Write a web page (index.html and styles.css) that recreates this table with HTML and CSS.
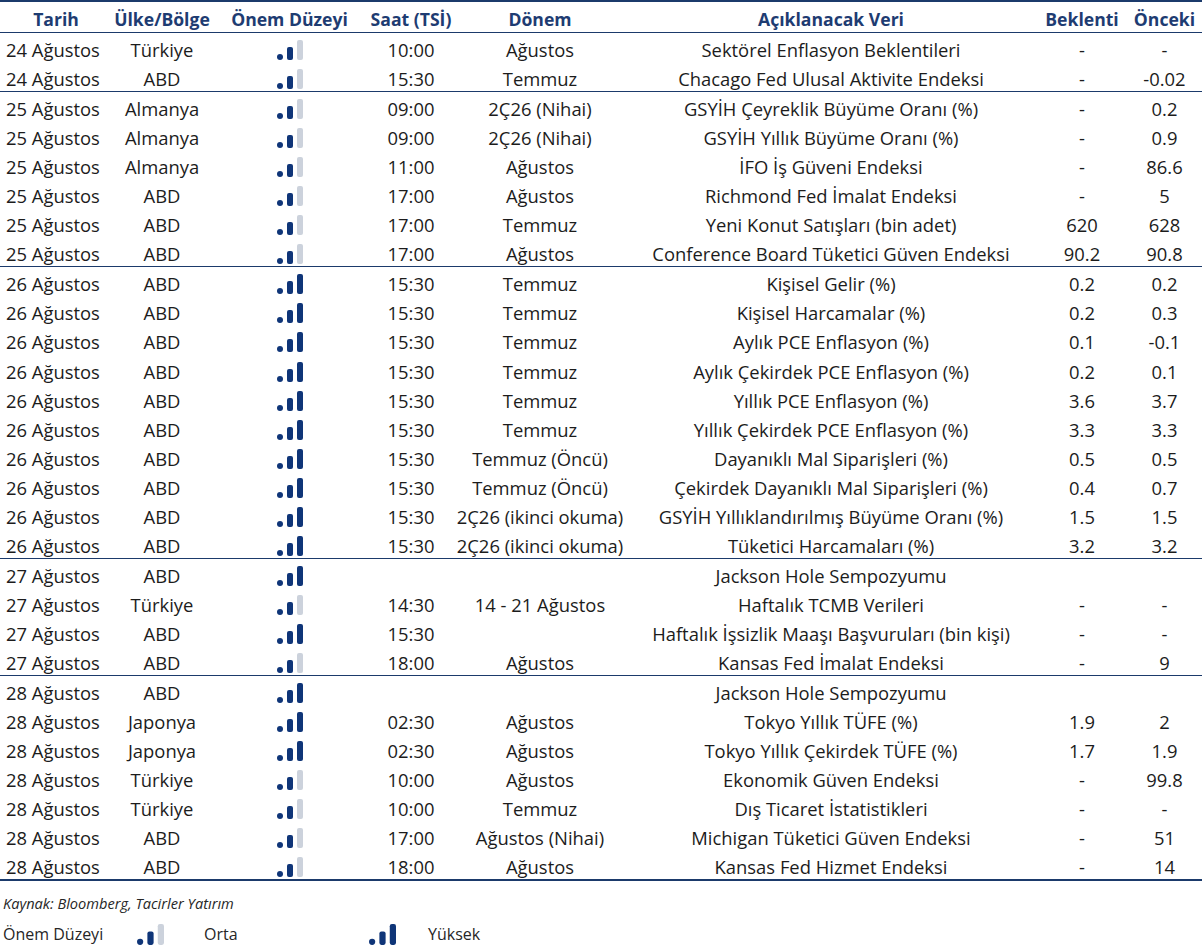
FILE: index.html
```html
<!DOCTYPE html>
<html lang="tr">
<head>
<meta charset="utf-8">
<title>Ekonomik Takvim</title>
<link rel="stylesheet" href="styles.css">
</head>
<body>
<div class="cal">
  <div class="row head">
    <div>Tarih</div><div>Ülke/Bölge</div><div>Önem Düzeyi</div><div>Saat (TSİ)</div><div>Dönem</div><div>Açıklanacak Veri</div><div>Beklenti</div><div>Önceki</div>
  </div>

  <div class="group">
    <div class="row"><div class="date">24 Ağustos</div><div>Türkiye</div><div class="ic"><svg class="lvl" viewBox="0 0 26 20"><rect x="0" y="14" width="6" height="6" rx="3"/><rect x="10" y="7" width="6" height="13" rx="2"/><rect class="off" x="20" y="0" width="6" height="20" rx="2"/></svg></div><div>10:00</div><div>Ağustos</div><div>Sektörel Enflasyon Beklentileri</div><div>-</div><div>-</div></div>
    <div class="row"><div class="date">24 Ağustos</div><div>ABD</div><div class="ic"><svg class="lvl" viewBox="0 0 26 20"><rect x="0" y="14" width="6" height="6" rx="3"/><rect x="10" y="7" width="6" height="13" rx="2"/><rect class="off" x="20" y="0" width="6" height="20" rx="2"/></svg></div><div>15:30</div><div>Temmuz</div><div>Chacago Fed Ulusal Aktivite Endeksi</div><div>-</div><div>-0.02</div></div>
  </div>

  <div class="group">
    <div class="row"><div class="date">25 Ağustos</div><div>Almanya</div><div class="ic"><svg class="lvl" viewBox="0 0 26 20"><rect x="0" y="14" width="6" height="6" rx="3"/><rect x="10" y="7" width="6" height="13" rx="2"/><rect class="off" x="20" y="0" width="6" height="20" rx="2"/></svg></div><div>09:00</div><div>2Ç26 (Nihai)</div><div>GSYİH Çeyreklik Büyüme Oranı (%)</div><div>-</div><div>0.2</div></div>
    <div class="row"><div class="date">25 Ağustos</div><div>Almanya</div><div class="ic"><svg class="lvl" viewBox="0 0 26 20"><rect x="0" y="14" width="6" height="6" rx="3"/><rect x="10" y="7" width="6" height="13" rx="2"/><rect class="off" x="20" y="0" width="6" height="20" rx="2"/></svg></div><div>09:00</div><div>2Ç26 (Nihai)</div><div>GSYİH Yıllık Büyüme Oranı (%)</div><div>-</div><div>0.9</div></div>
    <div class="row"><div class="date">25 Ağustos</div><div>Almanya</div><div class="ic"><svg class="lvl" viewBox="0 0 26 20"><rect x="0" y="14" width="6" height="6" rx="3"/><rect x="10" y="7" width="6" height="13" rx="2"/><rect class="off" x="20" y="0" width="6" height="20" rx="2"/></svg></div><div>11:00</div><div>Ağustos</div><div>İFO İş Güveni Endeksi</div><div>-</div><div>86.6</div></div>
    <div class="row"><div class="date">25 Ağustos</div><div>ABD</div><div class="ic"><svg class="lvl" viewBox="0 0 26 20"><rect x="0" y="14" width="6" height="6" rx="3"/><rect x="10" y="7" width="6" height="13" rx="2"/><rect class="off" x="20" y="0" width="6" height="20" rx="2"/></svg></div><div>17:00</div><div>Ağustos</div><div>Richmond Fed İmalat Endeksi</div><div>-</div><div>5</div></div>
    <div class="row"><div class="date">25 Ağustos</div><div>ABD</div><div class="ic"><svg class="lvl" viewBox="0 0 26 20"><rect x="0" y="14" width="6" height="6" rx="3"/><rect x="10" y="7" width="6" height="13" rx="2"/><rect class="off" x="20" y="0" width="6" height="20" rx="2"/></svg></div><div>17:00</div><div>Temmuz</div><div>Yeni Konut Satışları (bin adet)</div><div>620</div><div>628</div></div>
    <div class="row"><div class="date">25 Ağustos</div><div>ABD</div><div class="ic"><svg class="lvl" viewBox="0 0 26 20"><rect x="0" y="14" width="6" height="6" rx="3"/><rect x="10" y="7" width="6" height="13" rx="2"/><rect class="off" x="20" y="0" width="6" height="20" rx="2"/></svg></div><div>17:00</div><div>Ağustos</div><div>Conference Board Tüketici Güven Endeksi</div><div>90.2</div><div>90.8</div></div>
  </div>

  <div class="group">
    <div class="row"><div class="date">26 Ağustos</div><div>ABD</div><div class="ic"><svg class="lvl" viewBox="0 0 26 20"><rect x="0" y="14" width="6" height="6" rx="3"/><rect x="10" y="7" width="6" height="13" rx="2"/><rect x="20" y="0" width="6" height="20" rx="2"/></svg></div><div>15:30</div><div>Temmuz</div><div>Kişisel Gelir (%)</div><div>0.2</div><div>0.2</div></div>
    <div class="row"><div class="date">26 Ağustos</div><div>ABD</div><div class="ic"><svg class="lvl" viewBox="0 0 26 20"><rect x="0" y="14" width="6" height="6" rx="3"/><rect x="10" y="7" width="6" height="13" rx="2"/><rect x="20" y="0" width="6" height="20" rx="2"/></svg></div><div>15:30</div><div>Temmuz</div><div>Kişisel Harcamalar (%)</div><div>0.2</div><div>0.3</div></div>
    <div class="row"><div class="date">26 Ağustos</div><div>ABD</div><div class="ic"><svg class="lvl" viewBox="0 0 26 20"><rect x="0" y="14" width="6" height="6" rx="3"/><rect x="10" y="7" width="6" height="13" rx="2"/><rect x="20" y="0" width="6" height="20" rx="2"/></svg></div><div>15:30</div><div>Temmuz</div><div>Aylık PCE Enflasyon (%)</div><div>0.1</div><div>-0.1</div></div>
    <div class="row"><div class="date">26 Ağustos</div><div>ABD</div><div class="ic"><svg class="lvl" viewBox="0 0 26 20"><rect x="0" y="14" width="6" height="6" rx="3"/><rect x="10" y="7" width="6" height="13" rx="2"/><rect x="20" y="0" width="6" height="20" rx="2"/></svg></div><div>15:30</div><div>Temmuz</div><div>Aylık Çekirdek PCE Enflasyon (%)</div><div>0.2</div><div>0.1</div></div>
    <div class="row"><div class="date">26 Ağustos</div><div>ABD</div><div class="ic"><svg class="lvl" viewBox="0 0 26 20"><rect x="0" y="14" width="6" height="6" rx="3"/><rect x="10" y="7" width="6" height="13" rx="2"/><rect x="20" y="0" width="6" height="20" rx="2"/></svg></div><div>15:30</div><div>Temmuz</div><div>Yıllık PCE Enflasyon (%)</div><div>3.6</div><div>3.7</div></div>
    <div class="row"><div class="date">26 Ağustos</div><div>ABD</div><div class="ic"><svg class="lvl" viewBox="0 0 26 20"><rect x="0" y="14" width="6" height="6" rx="3"/><rect x="10" y="7" width="6" height="13" rx="2"/><rect x="20" y="0" width="6" height="20" rx="2"/></svg></div><div>15:30</div><div>Temmuz</div><div>Yıllık Çekirdek PCE Enflasyon (%)</div><div>3.3</div><div>3.3</div></div>
    <div class="row"><div class="date">26 Ağustos</div><div>ABD</div><div class="ic"><svg class="lvl" viewBox="0 0 26 20"><rect x="0" y="14" width="6" height="6" rx="3"/><rect x="10" y="7" width="6" height="13" rx="2"/><rect x="20" y="0" width="6" height="20" rx="2"/></svg></div><div>15:30</div><div>Temmuz (Öncü)</div><div>Dayanıklı Mal Siparişleri (%)</div><div>0.5</div><div>0.5</div></div>
    <div class="row"><div class="date">26 Ağustos</div><div>ABD</div><div class="ic"><svg class="lvl" viewBox="0 0 26 20"><rect x="0" y="14" width="6" height="6" rx="3"/><rect x="10" y="7" width="6" height="13" rx="2"/><rect x="20" y="0" width="6" height="20" rx="2"/></svg></div><div>15:30</div><div>Temmuz (Öncü)</div><div>Çekirdek Dayanıklı Mal Siparişleri (%)</div><div>0.4</div><div>0.7</div></div>
    <div class="row"><div class="date">26 Ağustos</div><div>ABD</div><div class="ic"><svg class="lvl" viewBox="0 0 26 20"><rect x="0" y="14" width="6" height="6" rx="3"/><rect x="10" y="7" width="6" height="13" rx="2"/><rect x="20" y="0" width="6" height="20" rx="2"/></svg></div><div>15:30</div><div>2Ç26 (ikinci okuma)</div><div>GSYİH Yıllıklandırılmış Büyüme Oranı (%)</div><div>1.5</div><div>1.5</div></div>
    <div class="row"><div class="date">26 Ağustos</div><div>ABD</div><div class="ic"><svg class="lvl" viewBox="0 0 26 20"><rect x="0" y="14" width="6" height="6" rx="3"/><rect x="10" y="7" width="6" height="13" rx="2"/><rect x="20" y="0" width="6" height="20" rx="2"/></svg></div><div>15:30</div><div>2Ç26 (ikinci okuma)</div><div>Tüketici Harcamaları (%)</div><div>3.2</div><div>3.2</div></div>
  </div>

  <div class="group">
    <div class="row"><div class="date">27 Ağustos</div><div>ABD</div><div class="ic"><svg class="lvl" viewBox="0 0 26 20"><rect x="0" y="14" width="6" height="6" rx="3"/><rect x="10" y="7" width="6" height="13" rx="2"/><rect x="20" y="0" width="6" height="20" rx="2"/></svg></div><div></div><div></div><div>Jackson Hole Sempozyumu</div><div></div><div></div></div>
    <div class="row"><div class="date">27 Ağustos</div><div>Türkiye</div><div class="ic"><svg class="lvl" viewBox="0 0 26 20"><rect x="0" y="14" width="6" height="6" rx="3"/><rect x="10" y="7" width="6" height="13" rx="2"/><rect class="off" x="20" y="0" width="6" height="20" rx="2"/></svg></div><div>14:30</div><div>14 - 21 Ağustos</div><div>Haftalık TCMB Verileri</div><div>-</div><div>-</div></div>
    <div class="row"><div class="date">27 Ağustos</div><div>ABD</div><div class="ic"><svg class="lvl" viewBox="0 0 26 20"><rect x="0" y="14" width="6" height="6" rx="3"/><rect x="10" y="7" width="6" height="13" rx="2"/><rect x="20" y="0" width="6" height="20" rx="2"/></svg></div><div>15:30</div><div></div><div>Haftalık İşsizlik Maaşı Başvuruları (bin kişi)</div><div>-</div><div>-</div></div>
    <div class="row"><div class="date">27 Ağustos</div><div>ABD</div><div class="ic"><svg class="lvl" viewBox="0 0 26 20"><rect x="0" y="14" width="6" height="6" rx="3"/><rect x="10" y="7" width="6" height="13" rx="2"/><rect class="off" x="20" y="0" width="6" height="20" rx="2"/></svg></div><div>18:00</div><div>Ağustos</div><div>Kansas Fed İmalat Endeksi</div><div>-</div><div>9</div></div>
  </div>

  <div class="group">
    <div class="row"><div class="date">28 Ağustos</div><div>ABD</div><div class="ic"><svg class="lvl" viewBox="0 0 26 20"><rect x="0" y="14" width="6" height="6" rx="3"/><rect x="10" y="7" width="6" height="13" rx="2"/><rect x="20" y="0" width="6" height="20" rx="2"/></svg></div><div></div><div></div><div>Jackson Hole Sempozyumu</div><div></div><div></div></div>
    <div class="row"><div class="date">28 Ağustos</div><div>Japonya</div><div class="ic"><svg class="lvl" viewBox="0 0 26 20"><rect x="0" y="14" width="6" height="6" rx="3"/><rect x="10" y="7" width="6" height="13" rx="2"/><rect x="20" y="0" width="6" height="20" rx="2"/></svg></div><div>02:30</div><div>Ağustos</div><div>Tokyo Yıllık TÜFE (%)</div><div>1.9</div><div>2</div></div>
    <div class="row"><div class="date">28 Ağustos</div><div>Japonya</div><div class="ic"><svg class="lvl" viewBox="0 0 26 20"><rect x="0" y="14" width="6" height="6" rx="3"/><rect x="10" y="7" width="6" height="13" rx="2"/><rect x="20" y="0" width="6" height="20" rx="2"/></svg></div><div>02:30</div><div>Ağustos</div><div>Tokyo Yıllık Çekirdek TÜFE (%)</div><div>1.7</div><div>1.9</div></div>
    <div class="row"><div class="date">28 Ağustos</div><div>Türkiye</div><div class="ic"><svg class="lvl" viewBox="0 0 26 20"><rect x="0" y="14" width="6" height="6" rx="3"/><rect x="10" y="7" width="6" height="13" rx="2"/><rect class="off" x="20" y="0" width="6" height="20" rx="2"/></svg></div><div>10:00</div><div>Ağustos</div><div>Ekonomik Güven Endeksi</div><div>-</div><div>99.8</div></div>
    <div class="row"><div class="date">28 Ağustos</div><div>Türkiye</div><div class="ic"><svg class="lvl" viewBox="0 0 26 20"><rect x="0" y="14" width="6" height="6" rx="3"/><rect x="10" y="7" width="6" height="13" rx="2"/><rect class="off" x="20" y="0" width="6" height="20" rx="2"/></svg></div><div>10:00</div><div>Temmuz</div><div>Dış Ticaret İstatistikleri</div><div>-</div><div>-</div></div>
    <div class="row"><div class="date">28 Ağustos</div><div>ABD</div><div class="ic"><svg class="lvl" viewBox="0 0 26 20"><rect x="0" y="14" width="6" height="6" rx="3"/><rect x="10" y="7" width="6" height="13" rx="2"/><rect class="off" x="20" y="0" width="6" height="20" rx="2"/></svg></div><div>17:00</div><div>Ağustos (Nihai)</div><div>Michigan Tüketici Güven Endeksi</div><div>-</div><div>51</div></div>
    <div class="row"><div class="date">28 Ağustos</div><div>ABD</div><div class="ic"><svg class="lvl" viewBox="0 0 26 20"><rect x="0" y="14" width="6" height="6" rx="3"/><rect x="10" y="7" width="6" height="13" rx="2"/><rect class="off" x="20" y="0" width="6" height="20" rx="2"/></svg></div><div>18:00</div><div>Ağustos</div><div>Kansas Fed Hizmet Endeksi</div><div>-</div><div>14</div></div>
  </div>
</div>

<div class="notes">
  <p class="source">Kaynak: Bloomberg, Tacirler Yatırım</p>
  <div class="legend">
    <span>Önem Düzeyi</span>
    <svg class="lvl" viewBox="0 0 26 20"><rect x="0" y="14" width="6" height="6" rx="3"/><rect x="10" y="7" width="6" height="13" rx="2"/><rect class="off" x="20" y="0" width="6" height="20" rx="2"/></svg>
    <span>Orta</span>
    <svg class="lvl" viewBox="0 0 26 20"><rect x="0" y="14" width="6" height="6" rx="3"/><rect x="10" y="7" width="6" height="13" rx="2"/><rect x="20" y="0" width="6" height="20" rx="2"/></svg>
    <span>Yüksek</span>
  </div>
</div>
</body>
</html>
```

FILE: styles.css
```css
html, body {
  margin: 0;
  padding: 0;
  background: #ffffff;
}

body {
  font-family: "Open Sans", "Noto Sans", sans-serif;
  color: #1c1c1c;
  width: 1202px;
}

.cal {
  border-top: 2px solid #1b3a6b;
  border-bottom: 2px solid #1b3a6b;
}

.row {
  display: grid;
  grid-template-columns: 112px 100px 155px 88px 170px 412px 90px 75px;
  height: 29.05px;
  font-size: 18.4px;
  text-align: center;
  white-space: nowrap;
}

.row > div {
  line-height: 24px;
  padding-top: 5px;
}

.row .date {
  text-align: left;
  padding-left: 6px;
}

.row > .ic {
  padding-top: 0;
}

.head {
  height: 30px;
  border-bottom: 1px solid #1b3a6b;
  font-weight: 700;
  color: #1e3c72;
  font-size: 17.6px;
}

.head > div {
  line-height: 26px;
  padding-top: 4px;
}

.group + .group {
  border-top: 1px solid #1b3a6b;
}

.lvl {
  display: block;
  width: 26px;
  height: 20px;
  fill: #0f3578;
}

.lvl .off {
  fill: #ccd2dc;
}

.ic .lvl {
  margin: 7px auto 0;
}

.notes {
  padding-left: 3px;
}

.source {
  margin: 12px 0 0;
  font-style: italic;
  font-size: 14.6px;
  line-height: 20px;
  color: #262626;
}

.legend {
  display: grid;
  grid-template-columns: 134px 67px 165px 59px auto;
  align-items: center;
  margin-top: 10px;
  font-size: 16px;
  line-height: 22px;
  color: #262626;
}

.legend .lvl {
  width: 27px;
  height: 21px;
}
```
